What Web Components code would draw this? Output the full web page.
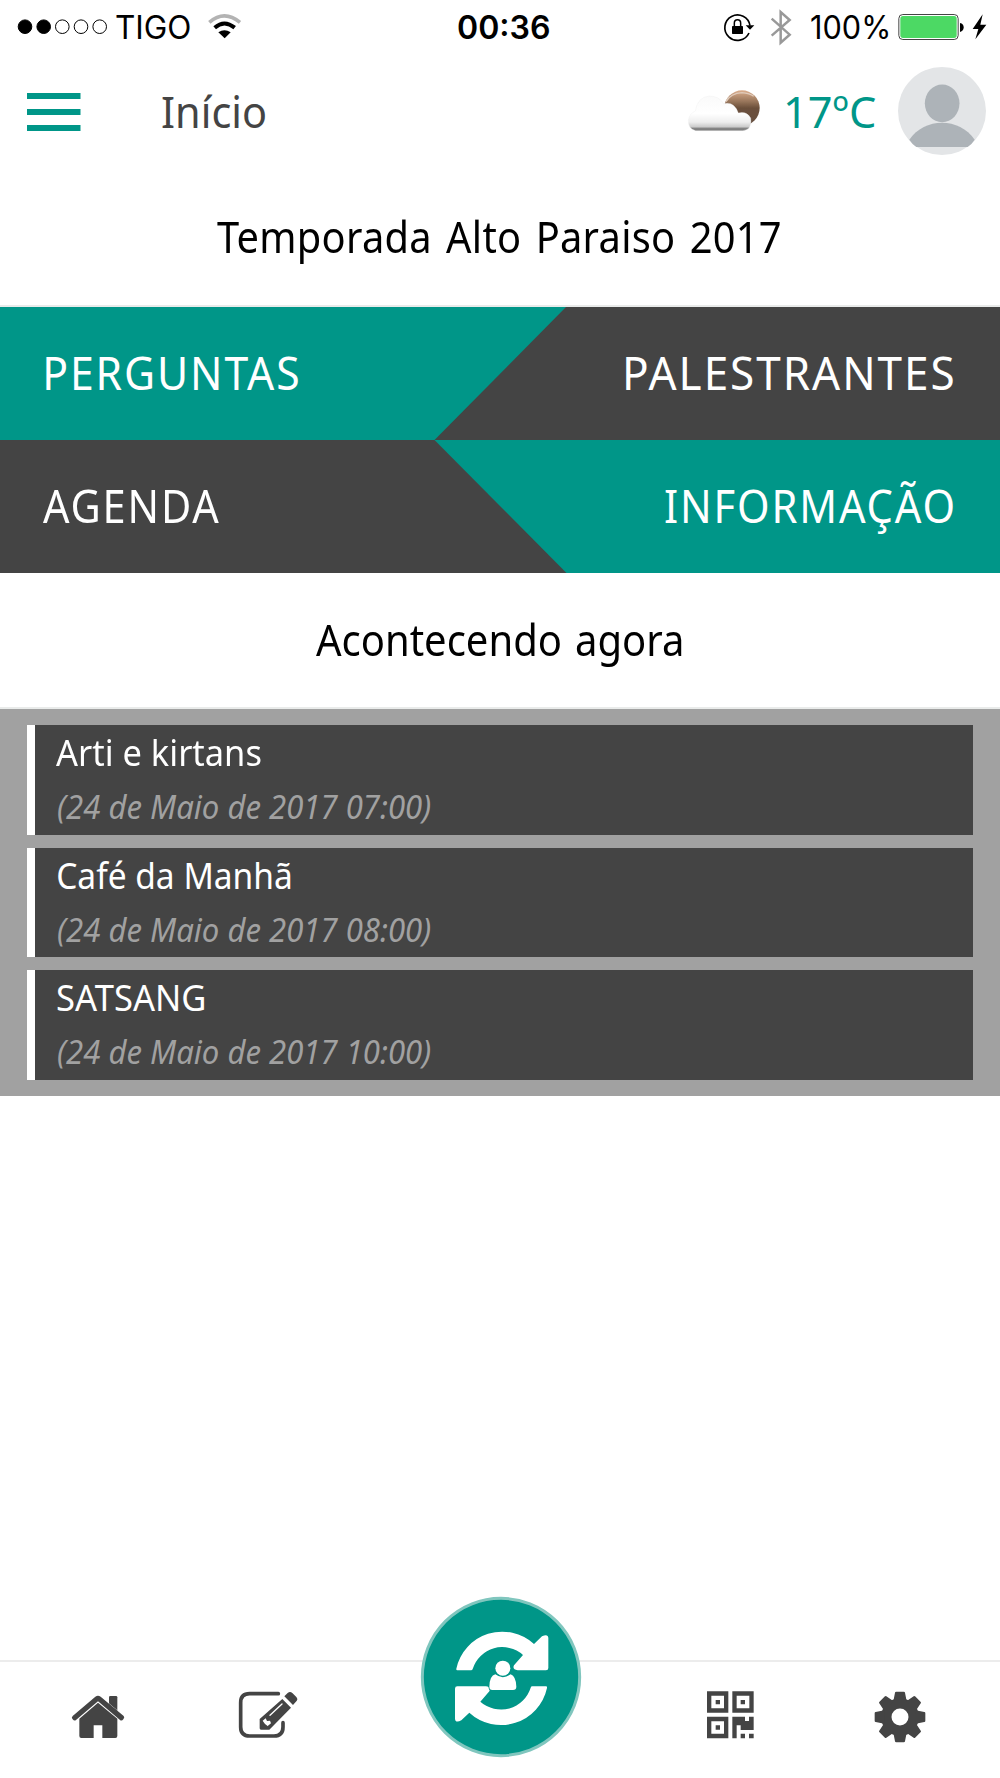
<!DOCTYPE html>
<html lang="pt">
<head>
<meta charset="utf-8">
<title>Início</title>
<style>
html,body{margin:0;padding:0;background:#fff}
body{width:1000px;height:1778px;overflow:hidden;font-family:"Noto Sans","Open Sans",sans-serif;color:#000}
</style>
</head>
<body>
<event-app></event-app>
<script>
const define = (name, html, setup) => {
  const t = document.createElement('template');
  t.innerHTML = html;
  customElements.define(name, class extends HTMLElement {
    connectedCallback() {
      if (this.shadowRoot) return;
      this.attachShadow({mode: 'open'}).append(t.content.cloneNode(true));
      if (setup) setup(this, this.shadowRoot);
    }
  });
};

/* A single line of text whose visible glyphs fill exactly the given width. */
const pen = document.createElement('canvas').getContext('2d');
define('fit-text', `<style>
:host{display:block;flex:none;white-space:nowrap}
span{display:inline-block;transform-origin:0 50%}
</style><span><slot></slot></span>`, (el, root) => {
  const width = +el.getAttribute('width');
  el.style.width = width + 'px';
  const cs = getComputedStyle(el);
  pen.font = `${cs.fontStyle} ${cs.fontWeight} ${cs.fontSize} ${cs.fontFamily}`;
  pen.letterSpacing = cs.letterSpacing === 'normal' ? '0px' : cs.letterSpacing;
  pen.wordSpacing = cs.wordSpacing === 'normal' ? '0px' : cs.wordSpacing;
  const m = pen.measureText(el.textContent);
  const left = -m.actualBoundingBoxLeft;
  const s = width / (m.actualBoundingBoxRight - left);
  root.querySelector('span').style.transform = `translateX(${-left * s}px) scaleX(${s})`;
});

define('status-bar', `<style>
:host{display:grid;grid-template-columns:457.500px 91px 1fr;align-items:center;height:56px;flex:none;font:400 32px/56px Inter,"Liberation Sans",sans-serif}
svg{display:block;flex:none}
div{display:flex;align-items:center;height:56px}
.l{padding-left:17px}.l svg+fit-text{margin-left:6px}
.wifi{margin-left:17px}
.r{padding-left:174.500px}
.bat{margin-left:7.500px}
fit-text.time{font-weight:600}
</style>
<div class="l">
<svg width="93" height="56" viewBox="17 0 93 56"><g stroke="#000" stroke-width="1"><circle cx="25" cy="26.7" r="6.8"/><circle cx="43.7" cy="26.7" r="6.8"/><g fill="none"><circle cx="62.3" cy="26.7" r="6.8"/><circle cx="81" cy="26.7" r="6.8"/><circle cx="99.7" cy="26.7" r="6.8"/></g></g></svg>
<fit-text width="74">TIGO</fit-text>
<svg class="wifi" width="36" height="56" viewBox="621 0 108 168"><path d="M628 67Q673 28 720 67" fill="none" stroke="#b3b3b3" stroke-width="11"/><path d="M644 83Q673 58 704 83" fill="none" stroke="#000" stroke-width="12"/><path d="M655 97Q673 84 692 97L674 115Z"/></svg>
</div>
<fit-text class="time" width="91">00:36</fit-text>
<div class="r">
<svg width="88" height="56" viewBox="129 0 264 168"><path d="M207 99A38 38 0 1 1 210 77" fill="none" stroke="#000" stroke-width="5"/><path d="M197 76H223L210 89Z"/><rect x="156" y="78" width="33" height="24" rx="2"/><path d="M163 79V69a9.500 10 0 0 1 19 0V79" fill="none" stroke="#000" stroke-width="4.500"/><path d="M275 56L329 104L302 128V36L329 60L275 107" fill="none" stroke="#999" stroke-width="7.500"/></svg>
<fit-text width="77">100%</fit-text>
<svg class="bat" width="98" height="56" viewBox="648 0 294 168"><rect x="656.500" y="43.500" width="178" height="75" rx="12" fill="#fff" stroke="#444" stroke-width="3"/><rect x="661" y="48" width="169" height="66" rx="8" fill="#4cd964"/><path d="M840 69Q851 71 851 82T840 96Z"/><path d="M908 43L878 87H895L886 118L919 74H901Z"/></svg>
</div>`);

define('menu-icon', `<style>:host{display:block;flex:none}svg{display:block}</style>
<svg width="54" height="40" viewBox="0 0 54 40" fill="#009688"><path d="M0 1h53.500v6H0zM0 17h53.500v6H0zM0 33h53.500v6H0z"/></svg>`);

define('weather-icon', `<style>:host{display:block;flex:none}svg{display:block}</style>
<svg width="74" height="48" viewBox="22 260 222 144">
<defs>
<linearGradient id="s" x1="0" y1="0" x2="0" y2="1"><stop offset="0" stop-color="#dcae8d"/><stop offset=".3" stop-color="#9b785d"/><stop offset=".5" stop-color="#6b4f3b"/><stop offset="1" stop-color="#665041"/></linearGradient>
<linearGradient id="c" gradientUnits="userSpaceOnUse" x1="0" y1="286" x2="0" y2="393"><stop offset="0" stop-color="#fafafa"/><stop offset=".5" stop-color="#fff"/><stop offset=".74" stop-color="#eee"/><stop offset=".87" stop-color="#ccc"/><stop offset=".92" stop-color="#858585"/><stop offset="1" stop-color="#777"/></linearGradient>
<filter id="b"><feGaussianBlur stdDeviation="1.500"/></filter>
</defs>
<g filter="url(#b)"><circle cx="187" cy="323" r="53" fill="url(#s)"/><path d="M139 304Q153 279 187 277Q211 279 222 288" fill="none" stroke="#e0cbbb" stroke-width="4"/>
<path d="M48 391Q25 387 26 360Q29 340 47 332Q53 291 88 287Q121 288 131 310Q164 302 176 338Q201 332 213 353Q218 388 190 391Z" fill="url(#c)" stroke="#ececec" stroke-width="1"/></g></svg>`);

define('user-avatar', `<style>:host{display:block;flex:none}svg{display:block}</style>
<svg width="88" height="88" viewBox="656 200 264 264"><circle cx="788" cy="332" r="132" fill="#e3e5e7"/><ellipse cx="788.500" cy="309" rx="52" ry="56.500" fill="#adb3b8"/><path d="M690 418C713 384 750 367 788 367S863 384 886 418Q878 431 865 440H711Q698 431 690 418Z" fill="#adb3b8"/></svg>`);

define('app-header', `<style>
:host{display:flex;align-items:center;height:111px;flex:none;padding-left:27px;padding-bottom:2px;box-sizing:border-box;font-size:44px;line-height:60px}
menu-icon{padding-top:2px}
.t{margin-left:81px;color:#444}weather-icon{margin-left:421.500px}.g{margin-left:24.500px;color:#009688}user-avatar{margin-left:23px}
</style><menu-icon></menu-icon><fit-text class="t" width="103.500">Início</fit-text><weather-icon></weather-icon><fit-text class="g" width="89.500">17ºC</fit-text><user-avatar></user-avatar>`);

define('section-title', `<style>
:host{display:flex;align-items:center;justify-content:center;box-sizing:border-box;flex:none;font-size:44px;line-height:60px;border-bottom:2px solid #e9ebea}
</style><slot></slot>`);

define('nav-tile', `<style>
:host{display:flex;align-items:center;height:100%;padding:0 47px 0 46px;box-sizing:border-box;color:#fff;font-size:45px;line-height:60px;letter-spacing:2px}
:host([end]){justify-content:flex-end}
</style><slot></slot>`);

define('tile-grid', `<style>
:host{display:grid;grid-template-rows:133.500px 133px;flex:none}
.row{display:grid;grid-template-columns:500px 500px;position:relative;isolation:isolate}
.row::before{content:"";position:absolute;inset:0;z-index:-1}
.a{background:#444}.b{background:#009688}
.a::before{background:#009688;clip-path:polygon(0 0,566.500px 0,434.500px 100%,0 100%)}
.b::before{background:#444;clip-path:polygon(0 0,434.500px 0,566.500px 100%,0 100%)}
.ag{margin-left:-3px}
.b nav-tile{height:calc(100% - 1px)}
</style>
<div class="row a"><nav-tile><fit-text width="252">PERGUNTAS</fit-text></nav-tile><nav-tile end><fit-text width="327">PALESTRANTES</fit-text></nav-tile></div>
<div class="row b"><nav-tile><fit-text class="ag" width="176">AGENDA</fit-text></nav-tile><nav-tile end><fit-text width="288">INFORMAÇÃO</fit-text></nav-tile></div>`);

define('event-card', `<style>
:host{display:flex;flex-direction:column;height:109.500px;box-sizing:border-box;border-left:8px solid #fff;background:#444;padding:1px 0 0 22px;color:#fff;font-size:36.500px;line-height:52px}
.date{font-size:32px;font-style:italic;color:#a1a1a1;line-height:58px;margin-left:1px}
</style><slot></slot><div class="date"><slot name="date"></slot></div>`);

define('event-list', `<style>
:host{display:flex;flex-direction:column;gap:13px;padding:16px 27px;background:#a1a1a1;flex:none;height:386.500px;box-sizing:border-box}
.i{margin-left:-1px}.j{margin-left:1px}
</style>
<event-card><fit-text class="i" width="204.500">Arti e kirtans</fit-text><fit-text slot="date" width="372">(24 de Maio de 2017 07:00)</fit-text></event-card>
<event-card><fit-text class="j" width="232.500">Café da Manhã</fit-text><fit-text slot="date" width="372">(24 de Maio de 2017 08:00)</fit-text></event-card>
<event-card><fit-text width="147">SATSANG</fit-text><fit-text slot="date" width="372">(24 de Maio de 2017 10:00)</fit-text></event-card>`);

define('sync-button', `<style>:host{display:block}svg{display:block;overflow:visible}</style>
<svg width="162" height="162" viewBox="29 46 486 486"><circle cx="272" cy="289" r="236" fill="#009688" stroke="#80c6be" stroke-width="9"/>
<g fill="#fff"><path id="a" d="M141 269q-4 0-3-5A141 141 0 0 1 371 190L395 167Q413 158 414 172V262Q414 269 407 269H322Q305 267 311 254L338 223A93 93 0 0 0 187 265q-1 4-5 4Z"/><use href="#a" transform="rotate(180 274 293)"/>
<path d="M237 318Q238 285 255 281Q277 298 301 281Q317 287 318 318Q318 328 308 328H246Q237 328 237 318Z" stroke="#009688" stroke-width="5" paint-order="stroke"/><circle cx="277.500" cy="262.500" r="22.500" stroke="#009688" stroke-width="5" paint-order="stroke"/></g></svg>`);

define('tab-bar', `<style>
:host{display:grid;grid-template-columns:196px 143px 322px 137px 202px;justify-items:center;height:118px;box-sizing:border-box;border-top:2px solid #ececec;flex:none;padding-top:28px}
svg{display:block}
sync-button{margin-top:-94.500px;margin-left:1px}
</style>
<svg width="56" height="56" viewBox="61 150 168 168" fill="#444"><path d="M178 200V172q0-4 4-4h17q4 0 4 4V222Z"/><path d="M69 228L137 170Q145 164 153 170L222 228Q226 232 221 238Q216 244 211 240L145 184L79 240Q74 244 69 238Q64 233 69 228Z" stroke="#fff" stroke-width="2" paint-order="stroke"/><path d="M89 236L145 188L203 236V288q0 6-6 6H158V256H132V294H95q-6 0-6-6Z"/></svg>
<svg width="62" height="56" viewBox="562 150 186 168"><path d="M686 161H600Q573 161 573 188V261Q573 288 600 288H673Q700 288 700 261V248" fill="none" stroke="#444" stroke-width="11" stroke-linecap="round"/><path d="M630 237L698 177L724 203L659 269H634q-4 0-4-4ZM704 169L714 159Q721 153 728 159L740 171Q746 178 740 184L730 195Z" fill="#444"/><path d="M661 226L697 192" stroke="#fff" stroke-width="4" stroke-linecap="round"/><path d="M639 242L648 235L652 243L661 242L664 250L655 257V259L646 252Z" fill="#fff"/></svg>
<sync-button></sync-button>
<svg width="56" height="56" viewBox="67 150 168 168" fill="#444" fill-rule="evenodd"><path d="M82 154h64v64H82zM95 167v38h38v-38zM158 154h64v64H158zM171 167v38h38v-38zM82 230.500h64v64H82zM95 243.500v38h38v-38zM108 180h13v13h-13zM183 180h13v13h-13zM108 256h13v13h-13zM158 230.500h38V243h12V230.500h14V270H183V256H171V294.500H158zM183 281h13v13.500H183zM208 281h14v13.500H208z"/></svg>
<svg width="56" height="56" viewBox="575 150 168 168" fill="#444"><defs><path id="t" d="M642 184L647 158q0-3 4-3h22q4 0 4 3L682 184Z"/></defs><circle cx="662" cy="231" r="41" fill="none" stroke="#444" stroke-width="31"/><use href="#t"/><use href="#t" transform="rotate(45 662 231)"/><use href="#t" transform="rotate(90 662 231)"/><use href="#t" transform="rotate(135 662 231)"/><use href="#t" transform="rotate(180 662 231)"/><use href="#t" transform="rotate(225 662 231)"/><use href="#t" transform="rotate(270 662 231)"/><use href="#t" transform="rotate(315 662 231)"/></svg>`);

define('event-app', `<style>
:host{display:flex;flex-direction:column;width:1000px;height:1778px;background:#fff}
.one{height:139.500px;padding-right:3px;word-spacing:4px;letter-spacing:.3px}.two{height:136px;padding:0 2px 2px 0;word-spacing:3px}.space{flex:1}
</style>
<status-bar></status-bar><app-header></app-header>
<section-title class="one"><fit-text width="563.500">Temporada Alto Paraiso 2017</fit-text></section-title>
<tile-grid></tile-grid>
<section-title class="two"><fit-text width="366">Acontecendo agora</fit-text></section-title>
<event-list></event-list><div class="space"></div><tab-bar></tab-bar>`);
</script>
</body>
</html>
